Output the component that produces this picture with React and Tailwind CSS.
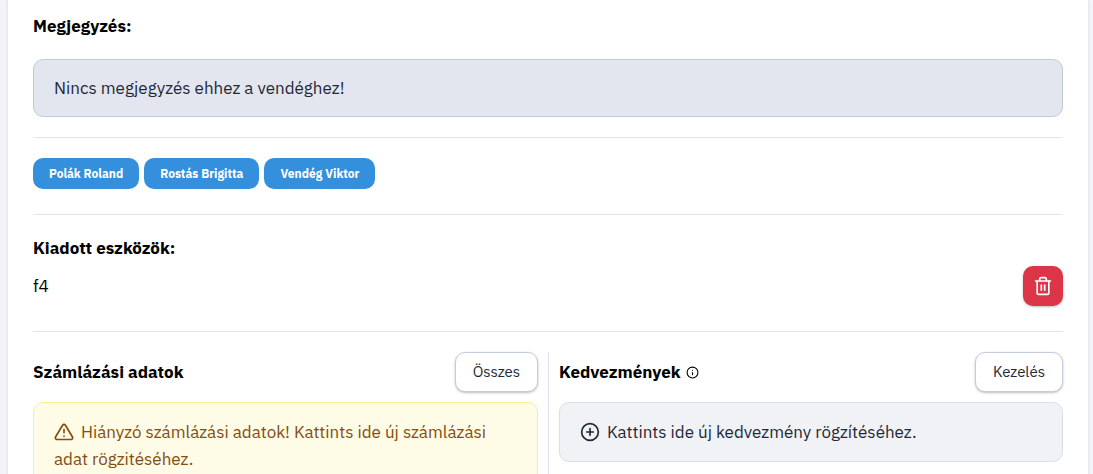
import { FiAlertTriangle, FiInfo, FiPlusCircle, FiTrash2 } from 'react-icons/fi';

const guests = ['Polák Roland', 'Rostás Brigitta', 'Vendég Viktor'];
const devices = ['f4'];

const headingClasses = 'text-[17px] leading-[27px] font-bold text-black';

function OutlineButton({ children }) {
  return (
    <button
      type="button"
      className="h-10 px-[17px] rounded-[10px] border border-[#c3cddd] bg-white text-[15px] leading-5 text-[#1f2937] shadow-sm shadow-black/20 hover:bg-slate-50"
    >
      {children}
    </button>
  );
}

function Divider({ className }) {
  return <hr className={`border-t border-[#e2e4ea] ${className}`} />;
}

export default function App() {
  return (
    <div className="min-h-screen overflow-hidden flex bg-[#f3f4fa] pl-2 pr-[5px] font-['IBM_Plex_Sans','Roboto',sans-serif] text-[17px] leading-[27px] text-black">
      <main className="flex-1 min-w-0 bg-white px-[25px] pt-[13px] shadow-[0_0_3px_rgba(0,0,0,0.12)]">
        <section>
          <h2 className={headingClasses}>Megjegyzés:</h2>
          <div className="mt-[19px] px-5 pt-[15px] pb-[14px] rounded-[10px] border border-[#bfcada] bg-[#e3e6ee] text-[#1f2937]">
            Nincs megjegyzés ehhez a vendéghez!
          </div>
        </section>

        <Divider className="mt-5 mb-5" />

        <div className="flex flex-wrap gap-[5px]">
          {guests.map((guest) => (
            <button
              key={guest}
              type="button"
              className="h-[31px] px-4 rounded-[10px] bg-[#348fdc] text-xs font-bold text-white"
            >
              {guest}
            </button>
          ))}
        </div>

        <Divider className="mt-[25px] mb-5" />

        <section>
          <h2 className={headingClasses}>Kiadott eszközök:</h2>
          {devices.map((device) => (
            <div key={device} className="mt-1 flex items-center justify-between">
              <span>{device}</span>
              <button
                type="button"
                aria-label="Eszköz törlése"
                className="size-10 flex items-center justify-center rounded-[10px] bg-[#dc3548] text-white shadow-sm shadow-black/20"
              >
                <FiTrash2 className="size-5" />
              </button>
            </div>
          ))}
        </section>

        <Divider className="mt-[25px] mb-5" />

        <div className="grid grid-cols-2">
          <section className="pr-[10px]">
            <div className="flex items-center justify-between">
              <h2 className={headingClasses}>Számlázási adatok</h2>
              <OutlineButton>Összes</OutlineButton>
            </div>
            <button
              type="button"
              className="mt-[10px] w-full px-5 pt-4 pb-[15px] rounded-[10px] border border-[#fdf08a] bg-[#fefbe6] text-left text-[#854d0e]"
            >
              <FiAlertTriangle className="inline size-5 mr-[7px] -mt-1" />
              Hiányzó számlázási adatok! Kattints ide új számlázási adat rögzitéséhez.
            </button>
          </section>

          <section className="border-l border-[#dfe2ea] pl-[10px]">
            <div className="flex items-center justify-between">
              <h2 className={`${headingClasses} flex items-center gap-[5px]`}>
                Kedvezmények
                <FiInfo className="size-[13px]" />
              </h2>
              <OutlineButton>Kezelés</OutlineButton>
            </div>
            <button
              type="button"
              className="mt-[10px] w-full px-5 pt-4 pb-[15px] rounded-[10px] border border-[#d9dfe9] bg-[#f1f2f5] text-left text-[#1f2937]"
            >
              <FiPlusCircle className="inline size-5 mr-[7px] -mt-1" />
              Kattints ide új kedvezmény rögzítéséhez.
            </button>
          </section>
        </div>
      </main>
    </div>
  );
}
